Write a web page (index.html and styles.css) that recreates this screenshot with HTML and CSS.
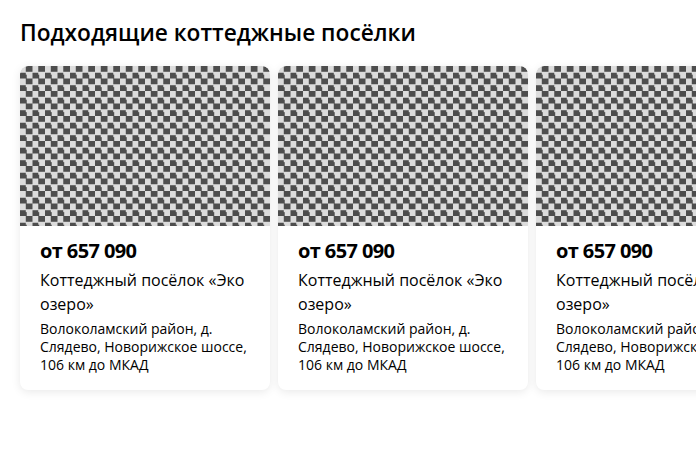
FILE: index.html
```html
<!DOCTYPE html>
<html lang="ru">
<head>
<meta charset="utf-8">
<link rel="stylesheet" href="styles.css">
</head>
<body>
<section class="block">
  <h2 class="block-title">Подходящие коттеджные посёлки</h2>
  <div class="cards">
    <article class="card">
      <div class="card-image"></div>
      <div class="card-body">
        <div class="card-price">от 657 090</div>
        <div class="card-name">Коттеджный посёлок «Эко озеро»</div>
        <div class="card-address">Волоколамский район, д. Слядево, Новорижское шоссе, 106 км до МКАД</div>
      </div>
    </article>
    <article class="card">
      <div class="card-image"></div>
      <div class="card-body">
        <div class="card-price">от 657 090</div>
        <div class="card-name">Коттеджный посёлок «Эко озеро»</div>
        <div class="card-address">Волоколамский район, д. Слядево, Новорижское шоссе, 106 км до МКАД</div>
      </div>
    </article>
    <article class="card">
      <div class="card-image"></div>
      <div class="card-body">
        <div class="card-price">от 657 090</div>
        <div class="card-name">Коттеджный посёлок «Эко озеро»</div>
        <div class="card-address">Волоколамский район, д. Слядево, Новорижское шоссе, 106 км до МКАД</div>
      </div>
    </article>
  </div>
</section>
</body>
</html>
```

FILE: styles.css
```css
html, body {
  margin: 0;
  padding: 0;
  background: #fff;
}
body {
  font-family: "Open Sans", "Noto Sans", sans-serif;
  color: #000;
}
.block {
  width: 696px;
  overflow: hidden;
  padding: 18px 0 40px 0;
}
.block-title {
  margin: 0 0 18px 20px;
  font-size: 22.7px;
  line-height: 30px;
  font-weight: 600;
  letter-spacing: 0;
}
.cards {
  display: flex;
  gap: 8px;
  padding: 0 0 20px 20px;
}
.card {
  flex: 0 0 250px;
  width: 250px;
  border-radius: 8px;
  background: #fff;
  box-shadow: 0 2px 10px rgba(0, 0, 0, 0.09);
  overflow: hidden;
}
.card-image {
  height: 160px;
  background-color: #dcdcdc;
  background-image:
    conic-gradient(#4d4d4d 0 25%, #dcdcdc 0 50%, #4d4d4d 0 75%, #dcdcdc 0);
  background-size: 12.5px 12.5px;
  border-radius: 8px 8px 0 0;
}
.card-body {
  padding: 13px 20px 16px 20px;
}
.card-price {
  font-size: 20px;
  line-height: 24px;
  font-weight: 700;
  letter-spacing: -0.6px;
  margin-bottom: 5px;
}
.card-name {
  font-size: 16px;
  line-height: 24px;
  margin-bottom: 4px;
}
.card-address {
  font-size: 14px;
  line-height: 18px;
}
```
